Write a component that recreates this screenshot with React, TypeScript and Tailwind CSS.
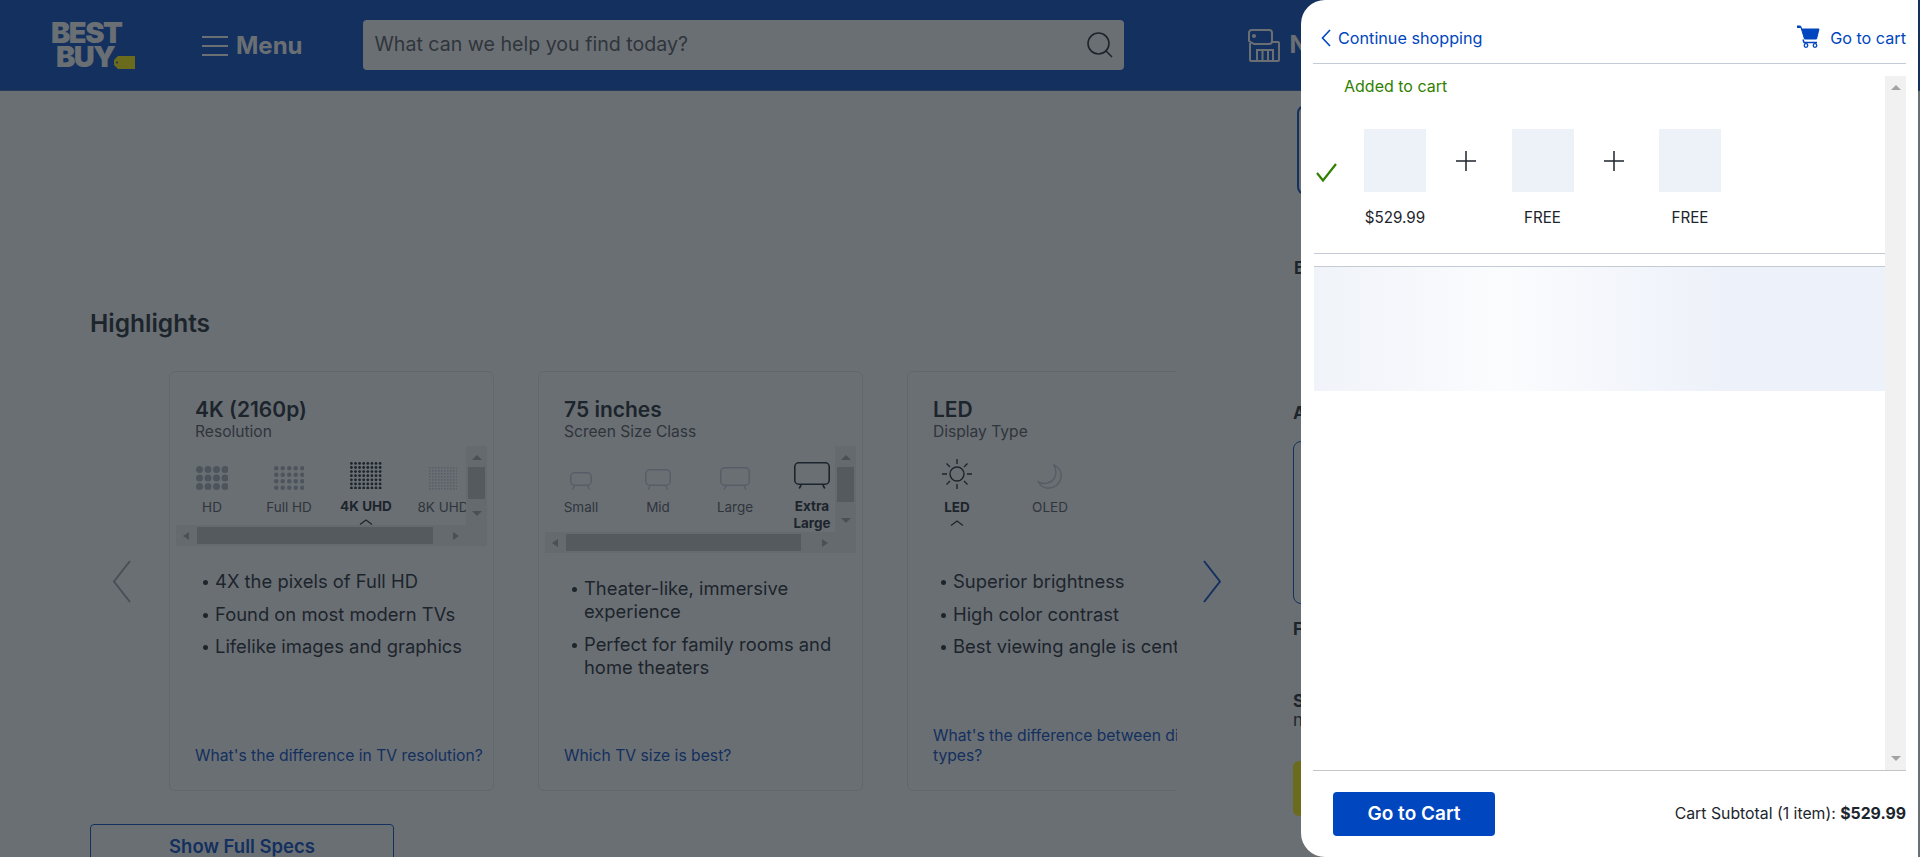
import React from "react";

const font = { fontFamily: "Inter, 'Liberation Sans', sans-serif" };

type Option = { label: string; icon: React.ReactNode; active?: boolean };

const Dots = ({ cols, rows, size, gap, color }: { cols: number; rows: number; size: number; gap: number; color: string }) => {
  const step = size + gap;
  const circles = [];
  for (let r = 0; r < rows; r++) {
    for (let c = 0; c < cols; c++) {
      circles.push(<circle key={`${r}-${c}`} cx={c * step + size / 2} cy={r * step + size / 2} r={size / 2} fill={color} />);
    }
  }
  return (
    <svg width={cols * step - gap} height={rows * step - gap}>
      {circles}
    </svg>
  );
};

const Tv = ({ w, h, color, stroke = 1.5 }: { w: number; h: number; color: string; stroke?: number }) => (
  <svg width={w} height={h} viewBox={`0 0 ${w} ${h}`} fill="none" stroke={color} strokeWidth={stroke}>
    <rect x={stroke / 2} y={stroke / 2} width={w - stroke} height={h - 4 - stroke} rx={4} />
    <path d={`M${w * 0.2} ${h - 4}l-2 3.5M${w * 0.8} ${h - 4}l2 3.5`} />
  </svg>
);

const Sun = () => (
  <svg width="32" height="32" viewBox="0 0 32 32" fill="none" stroke="#1d252c" strokeWidth="1.4">
    <circle cx="16" cy="16" r="7" />
    <path d="M16 1v5M16 26v5M1 16h5M26 16h5M5.5 5.5l3.5 3.5M23 23l3.5 3.5M5.5 26.5L9 23M23 9l3.5-3.5" />
  </svg>
);

const Moon = () => (
  <svg width="26" height="26" viewBox="0 0 26 26" fill="none" stroke="#c5cbd5" strokeWidth="1.6">
    <path d="M17 1c5 2 8 7 7 12-1 7-7 12-14 11-4-.5-7-3-8.500-6 6 3 13 1 16-4 2-4 1.500-9-.5-13z" />
  </svg>
);

const Caret = () => (
  <svg width="14" height="6" viewBox="0 0 14 6" fill="none" stroke="#1d252c" strokeWidth="1.2" className="mt-[4px] shrink-0">
    <path d="M1 5.500L7 1l6 4.500" />
  </svg>
);

const Arrow = ({ dir, color = "#a3a3a3" }: { dir: "up" | "down" | "left" | "right"; color?: string }) => {
  const d = {
    up: "M5 1l5 5H0z",
    down: "M5 7L0 2h10z",
    left: "M1 4l6-4v8z",
    right: "M7 4L1 0v8z",
  }[dir];
  return (
    <svg width="10" height="8" viewBox="0 0 10 8" className="block">
      <path d={d} fill={color} />
    </svg>
  );
};

const OptionCol = ({ option }: { option: Option }) => (
  <div className="flex w-[72px] shrink-0 flex-col items-center">
    <div className="flex h-[44px] items-end justify-center">{option.icon}</div>
    <div className={`mt-[9px] text-center text-[13.5px] leading-[17px] ${option.active ? "font-bold text-[#1d252c]" : "text-[#55555a]"}`}>
      {option.label === "Extra Large" ? (
        <>
          Extra
          <br />
          Large
        </>
      ) : (
        <span className="whitespace-nowrap">{option.label}</span>
      )}
    </div>
    {option.active && option.label !== "Extra Large" && <Caret />}
  </div>
);

const FakeScroller = ({ options, height, thumbTop, thumbH, thumbW }: { options: Option[]; height: number; thumbTop: number; thumbH: number; thumbW: number }) => (
  <div className="ml-[6px] mr-[6px] mt-[5px] flex flex-col">
    <div className="flex" style={{ height }}>
      <div className="flex flex-1 gap-[5px] overflow-hidden">
        {options.map((o) => (
          <OptionCol key={o.label} option={o} />
        ))}
      </div>
      <div className="relative flex w-[21px] flex-col items-center justify-between bg-[#f1f1f1] py-[8px]">
        <Arrow dir="up" />
        <div className="absolute left-[2px] w-[17px] bg-[#c1c1c1]" style={{ top: thumbTop, height: thumbH }} />
        <Arrow dir="down" />
      </div>
    </div>
    <div className="flex h-[21px] items-center bg-[#f1f1f1]">
      <div className="flex w-[21px] justify-center">
        <Arrow dir="left" />
      </div>
      <div className="h-[17px] bg-[#c1c1c1]" style={{ width: thumbW }} />
      <div className="flex-1" />
      <div className="mr-[25px]">
        <Arrow dir="right" />
      </div>
    </div>
  </div>
);

const Bullets = ({ items, className }: { items: string[]; className?: string }) => (
  <ul className={`flex flex-col gap-[9.5px] text-[18.4px] leading-[23px] text-[#1d252c] ${className ?? ""}`}>
    {items.map((t) => (
      <li key={t} className="flex">
        <span className="mt-[10px] mr-[7px] h-[5px] w-[5px] shrink-0 rounded-full bg-[#1d252c]" />
        <span className="whitespace-pre-line">{t}</span>
      </li>
    ))}
  </ul>
);

const Card = ({ title, sub, children, link }: { title: string; sub: string; children: React.ReactNode; link: React.ReactNode }) => (
  <div className="flex h-[420px] w-[325px] shrink-0 flex-col rounded-[6px] border border-[#e0e6ef] pb-[24px] pt-[25px]">
    <div className="px-[25px]">
      <div className="text-[21px] font-semibold leading-[26px] text-[#1d252c]">{title}</div>
      <div className="text-[15.6px] leading-[18px] text-[#55555a]">{sub}</div>
    </div>
    {children}
    <div className="mt-auto pl-[25px] pr-[4px] text-[15.7px] leading-[20px] text-[#0046be]">{link}</div>
  </div>
);

const resolution: Option[] = [
  { label: "HD", icon: <Dots cols={4} rows={3} size={7} gap={1.5} color="#a9afba" /> },
  { label: "Full HD", icon: <Dots cols={5} rows={4} size={4.5} gap={2} color="#a9afba" /> },
  { label: "4K UHD", active: true, icon: <Dots cols={8} rows={7} size={2.8} gap={1.3} color="#1d252c" /> },
  { label: "8K UHD", icon: <Dots cols={10} rows={8} size={1.7} gap={1.3} color="#c5cbd5" /> },
];

const sizes: Option[] = [
  { label: "Small", icon: <Tv w={22} h={18} color="#c5cbd5" /> },
  { label: "Mid", icon: <Tv w={26} h={21} color="#c5cbd5" /> },
  { label: "Large", icon: <Tv w={30} h={23} color="#c5cbd5" /> },
  { label: "Extra Large", active: true, icon: <Tv w={36} h={27} color="#1d252c" stroke={1.6} /> },
];

export default function App() {
  return (
    <div className="relative h-[857px] w-full overflow-hidden bg-white" style={font}>
      {/* header */}
      <header className="flex h-[91px] items-center border-b border-[#3a64b0] bg-[#0046be]">
        <div className="relative ml-[51px] h-[48px] w-[84px] shrink-0 font-black text-white">
          <div className="text-[29px] leading-[24px] tracking-[-1.5px]">BEST</div>
          <div className="ml-[5px] text-[29px] leading-[23px] tracking-[-1.5px]">BUY</div>
          <svg width="21" height="13" viewBox="0 0 21 13" className="absolute bottom-0 right-0">
            <path d="M4 0h17v13H4L0 9V4z" fill="#fff200" />
            <circle cx="3" cy="6.5" r="1" fill="#0046be" />
          </svg>
        </div>
        <svg width="26" height="20" viewBox="0 0 26 20" stroke="#fff" strokeWidth="2" className="ml-[67px] mt-[2px] shrink-0">
          <path d="M0 1h26M0 10h26M0 19h26" />
        </svg>
        <span className="ml-[8px] mt-[2px] text-[24px] font-bold text-white">Menu</span>
        <div className="ml-[60px] flex h-[50px] w-[761px] shrink-0 items-center justify-between rounded-[4px] bg-white pl-[12px] pr-[11px]">
          <span className="text-[19.6px] text-[#55555a]">What can we help you find today?</span>
          <svg width="26" height="26" viewBox="0 0 26 26" fill="none" stroke="#1d252c" strokeWidth="1.6">
            <circle cx="11.5" cy="11.5" r="10.5" />
            <path d="M18.5 18.5L25 25" />
          </svg>
        </div>
        <svg width="32" height="33" viewBox="0 0 32 33" fill="none" stroke="#fff" strokeWidth="2" className="ml-[124px] shrink-0">
          <path d="M4 1h17a3 3 0 0 1 3 3v8a3 3 0 0 1-3 3H6l-5-3V4a3 3 0 0 1 3-3z" />
          <path d="M24 13h6a1 1 0 0 1 1 1v17a1 1 0 0 1-1 1H3a1 1 0 0 1-1-1V14" />
          <path d="M9 32V21h16v11M14.5 21v11M20 21v11" />
          <circle cx="6" cy="7" r="1" fill="#fff" />
        </svg>
        <span className="ml-[10px] text-[24px] font-bold text-white">N</span>
      </header>

      {/* page under the dialog */}
      <main className="flex">
        <div className="w-[1293px] shrink-0 pl-[90px] pt-[217px]">
          <h2 className="text-[24.5px] font-semibold leading-[30px] text-[#1d252c]">Highlights</h2>
          <div className="mt-[33px] flex items-center pl-[22px]">
            <svg width="19" height="43" viewBox="0 0 19 43" fill="none" stroke="#9aa1ab" strokeWidth="2" className="shrink-0">
              <path d="M18 1L2 21.5 18 42" />
            </svg>
            <div className="ml-[38px] flex w-[1008px] shrink-0 gap-[44px] overflow-hidden">
              <Card title="4K (2160p)" sub="Resolution" link="What's the difference in TV resolution?">
                <FakeScroller options={resolution} height={79} thumbTop={21} thumbH={32} thumbW={236} />
                <Bullets className="ml-[33px] mt-[24px]" items={["4X the pixels of Full HD", "Found on most modern TVs", "Lifelike images and graphics"]} />
              </Card>
              <Card title="75 inches" sub="Screen Size Class" link="Which TV size is best?">
                <FakeScroller options={sizes} height={86} thumbTop={21} thumbH={35} thumbW={235} />
                <Bullets className="ml-[33px] mt-[24px]" items={["Theater-like, immersive\nexperience", "Perfect for family rooms and\nhome theaters"]} />
              </Card>
              <Card
                title="LED"
                sub="Display Type"
                link={
                  <span className="whitespace-nowrap">
                    What's the difference between display
                    <br />
                    types?
                  </span>
                }
              >
                <div className="ml-[13px] mt-[5px] flex h-[100px] gap-[21px]">
                  <OptionCol option={{ label: "LED", active: true, icon: <Sun /> }} />
                  <OptionCol option={{ label: "OLED", icon: <Moon /> }} />
                </div>
                <Bullets className="ml-[33px] mt-[24px] whitespace-nowrap" items={["Superior brightness", "High color contrast", "Best viewing angle is centered"]} />
              </Card>
            </div>
            <svg width="18" height="43" viewBox="0 0 18 43" fill="none" stroke="#0046be" strokeWidth="2" className="ml-[26px] shrink-0">
              <path d="M1 1l16 20.5L1 42" />
            </svg>
          </div>
          <button className="mt-[33px] h-[44px] w-[304px] rounded-[4px] border border-[#0046be] text-[18.5px] font-semibold leading-[22px] text-[#0046be]">
            Show Full Specs
          </button>
        </div>

        <aside className="w-[300px] shrink-0 text-[17px] font-bold text-[#1d252c]">
          <div className="ml-[4px] mt-[14px] h-[90px] rounded-[8px] border-2 border-[#0046be]" />
          <div className="ml-[1px] mt-[63px] leading-[20px]">E</div>
          <div className="mt-[125px] leading-[20px]">A</div>
          <div className="mt-[18px] h-[163px] rounded-[8px] border border-[#0046be]" />
          <div className="mt-[15px] leading-[20px]">F</div>
          <div className="mt-[52px] leading-[20px]">S</div>
          <div className="font-normal leading-[18px]">n</div>
          <div className="mt-[32px] h-[55px] rounded-[6px] bg-[#fff200]" />
        </aside>
      </main>

      {/* dimmed backdrop */}
      <div className="absolute inset-0 bg-[rgba(29,37,44,0.66)]" />

      {/* cart dialog */}
      <div className="absolute bottom-0 right-[2px] top-0 flex w-[617px] flex-col rounded-l-[24px] bg-white px-[12px]">
        <div className="flex h-[64px] shrink-0 items-center justify-between border-b border-[#c5cbd5] pt-[13px] text-[16.2px] text-[#0046be]">
          <div className="flex items-center">
            <svg width="10" height="18" viewBox="0 0 10 18" fill="none" stroke="#0046be" strokeWidth="1.6" className="ml-[8px]">
              <path d="M9 1L1.5 9 9 17" />
            </svg>
            <span className="ml-[7px]">Continue shopping</span>
          </div>
          <div className="flex items-center">
            <svg width="23" height="23" viewBox="0 0 23 23" className="mt-[-3px]">
              <path d="M0 1h3.5l1.200 3H22l-2.500 10H7.500L4 2.500H0z" fill="#0046be" stroke="#0046be" strokeWidth="1" />
              <path d="M6 14.5l1 3h13" fill="none" stroke="#0046be" strokeWidth="1.5" />
              <circle cx="9" cy="20.5" r="1.8" fill="none" stroke="#0046be" strokeWidth="1.3" />
              <circle cx="18" cy="20.5" r="1.8" fill="none" stroke="#0046be" strokeWidth="1.3" />
            </svg>
            <span className="ml-[10px]">Go to cart</span>
          </div>
        </div>

        <div className="mt-[12px] flex h-[695px] shrink-0 border-b border-[#c5c5c5]">
          <div className="flex-1">
            <div className="ml-[31px] text-[16px] leading-[20px] text-[#318000]">Added to cart</div>
            <div className="mt-[33px] flex pl-[3px]">
              <svg width="21" height="19" viewBox="0 0 21 19" fill="none" stroke="#318000" strokeWidth="2.2" className="mt-[34px] shrink-0">
                <path d="M1 10l6 7.500L20 1" />
              </svg>
              <div className="ml-[27px] flex">
                {["$529.99", "FREE", "FREE"].map((price, i) => (
                  <React.Fragment key={i}>
                    {i > 0 && (
                      <div className="flex h-[63px] w-[85.5px] items-center justify-center pr-[5px]">
                        <svg width="20" height="20" viewBox="0 0 20 20" stroke="#1d252c" strokeWidth="1.5">
                          <path d="M10 0v20M0 10h20" />
                        </svg>
                      </div>
                    )}
                    <div className="flex w-[62px] flex-col items-center">
                      <div className="h-[63px] w-[62px] bg-[#edf2f9]" />
                      <div className="mt-[17px] whitespace-nowrap text-[15.2px] leading-[18px] text-[#1d252c]">{price}</div>
                    </div>
                  </React.Fragment>
                ))}
              </div>
            </div>
            <div className="ml-[1px] mt-[26px] border-t border-[#c5cbd5]" />
            <div className="ml-[1px] mt-[12px] h-[125px] border-t border-[#c5cbd5] bg-[linear-gradient(90deg,#f0f3f9_0%,#fbfcfe_33%,#edf1f9_72%,#edf1f9_100%)]" />
          </div>
          <div className="flex w-[21px] flex-col items-center justify-between bg-[#f1f1f1] py-[8px]">
            <Arrow dir="up" />
            <Arrow dir="down" />
          </div>
        </div>

        <div className="flex flex-1 items-start justify-between pl-[20px] pt-[21px]">
          <button className="h-[44px] w-[162px] rounded-[4px] bg-[#0046be] text-[19px] font-semibold text-white">Go to Cart</button>
          <div className="mt-[12px] text-[15.8px] leading-[20px] text-[#1d252c]">
            Cart Subtotal (1 item): <span className="font-bold">$529.99</span>
          </div>
        </div>
      </div>
    </div>
  );
}
